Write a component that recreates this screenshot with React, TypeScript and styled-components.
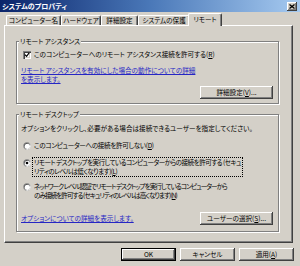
import React from "react";
import styled, { createGlobalStyle } from "styled-components";

const GlobalStyle = createGlobalStyle`
  html, body { margin: 0; padding: 0; background: #d4d0c8; }
  body {
    font-family: "Noto Sans CJK JP", "Noto Sans", sans-serif;
    font-size: 6.6px;
    font-feature-settings: "palt";
    color: #000;
  }
  * { box-sizing: border-box; }
`;

const Window = styled.div`
  width: 300px;
  height: 266px;
  background: #d4d0c8;
  display: flex;
  flex-direction: column;
  overflow: hidden;
`;

const TitleBar = styled.div`
  height: 12px;
  display: flex;
  align-items: center;
  justify-content: space-between;
  background: linear-gradient(to right, #0a246a 0%, #4a78b8 50%, #a6caf0 100%);
  padding: 0 3px 0 2px;
`;

const Title = styled.span`
  color: #fff;
  font-weight: 700;
  font-size: 7px;
  line-height: 12px;
`;

const CloseButton = styled.div`
  width: 10px;
  height: 9px;
  background: #d4d0c8;
  box-shadow: inset -1px -1px #404040, inset 1px 1px #fff, inset -2px -2px #808080;
  display: flex;
  align-items: center;
  justify-content: center;
`;

const TabRow = styled.div`
  display: flex;
  align-items: flex-end;
  height: 14px;
  padding-left: 6px;
  position: relative;
  z-index: 1;
`;

const Tab = styled.div<{ $w: number; $active?: boolean }>`
  width: ${(p) => p.$w}px;
  height: ${(p) => (p.$active ? 13 : 10)}px;
  margin-bottom: ${(p) => (p.$active ? 0 : 1)}px;
  margin-left: ${(p) => (p.$active ? -2 : 0)}px;
  background: #d4d0c8;
  border-top: 1px solid #fff;
  border-left: 1px solid #fff;
  border-right: 1px solid #404040;
  box-shadow: inset -1px 0 #808080;
  border-radius: 2px 2px 0 0;
  display: flex;
  align-items: center;
  justify-content: center;
  padding-bottom: ${(p) => (p.$active ? 2 : 0)}px;
  line-height: 9px;
  white-space: nowrap;
  position: relative;
  z-index: ${(p) => (p.$active ? 2 : 1)};
`;

const Panel = styled.div`
  margin: -1px 7px 0 4px;
  height: 218px;
  border-top: 1px solid #fff;
  border-left: 1px solid #fff;
  border-right: 1px solid #404040;
  border-bottom: 1px solid #404040;
  box-shadow: inset -1px -1px #808080;
  padding: 11px 13px 0 11px;
  display: flex;
  flex-direction: column;
`;

const Group = styled.fieldset<{ $pt: number; $pb: number; $mt: number }>`
  margin: ${(p) => p.$mt}px 0 0 0;
  border: 1px solid #808080;
  box-shadow: 1px 1px 0 #fff, inset 1px 1px 0 #fff;
  padding: ${(p) => p.$pt}px 5px ${(p) => p.$pb}px 4px;
  min-width: 0;
  display: flex;
  flex-direction: column;
`;

const Legend = styled.legend`
  padding: 0 1px;
  margin-left: -2px;
  line-height: 9px;
  background: #d4d0c8;
`;

const Line = styled.div<{ $mt?: number }>`
  line-height: 9px;
  white-space: nowrap;
  margin-top: ${(p) => p.$mt ?? 0}px;
`;

const OptionRow = styled.div<{ $mt?: number }>`
  display: flex;
  align-items: flex-start;
  gap: 2px;
  margin-top: ${(p) => p.$mt ?? 0}px;
  padding-left: 2px;
`;

const Box = styled.span`
  width: 8px;
  height: 8px;
  margin-top: 1px;
  flex: none;
  background: #fff;
  box-shadow: inset 1px 1px #808080, inset 2px 2px #404040, inset -1px -1px #fff, inset -2px -2px #d4d0c8;
  display: flex;
  align-items: center;
  justify-content: center;
`;

const RadioMark = styled.svg`
  width: 8px;
  height: 8px;
  margin-top: 1px;
  flex: none;
`;

const Label = styled.span<{ $focus?: boolean; $ls?: number }>`
  line-height: 9px;
  white-space: nowrap;
  padding: 0 1px;
  letter-spacing: ${(p) => p.$ls ?? 0}px;
  ${(p) => (p.$focus ? "outline: 1px dotted #000; outline-offset: 0;" : "")}
`;

const Link = styled.span`
  color: #2626c4;
  text-decoration: underline;
  line-height: 9px;
  white-space: nowrap;
`;

const LinkBlock = styled.div<{ $mt?: number }>`
  margin-top: ${(p) => p.$mt ?? 0}px;
  line-height: 9px;
`;

const ButtonRow = styled.div<{ $mt?: number }>`
  display: flex;
  justify-content: space-between;
  align-items: flex-end;
  margin-top: ${(p) => p.$mt ?? 0}px;
`;

const Button = styled.button<{ $w: number; $default?: boolean }>`
  width: ${(p) => p.$w}px;
  height: 13px;
  padding: 0;
  margin: 0;
  border: none;
  background: #d4d0c8;
  font-family: inherit;
  font-feature-settings: "palt";
  font-size: 6.6px;
  line-height: 11px;
  color: #000;
  box-shadow: ${(p) =>
    p.$default
      ? "inset 0 0 0 1px #000, inset -2px -2px #404040, inset 2px 2px #fff, inset -3px -3px #808080"
      : "inset -1px -1px #404040, inset 1px 1px #fff, inset -2px -2px #808080"};
`;

const Footer = styled.div`
  display: flex;
  justify-content: flex-end;
  gap: 4px;
  padding: 5px 6px 0 0;
`;

const Spacer = styled.div`
  flex: 1;
`;

function CheckMark() {
  return (
    <svg width="6" height="6" viewBox="0 0 7 7">
      <polyline points="1,3 3,5 6,1" fill="none" stroke="#000" strokeWidth="1.4" />
    </svg>
  );
}

function Radio({ checked }: { checked?: boolean }) {
  return (
    <RadioMark viewBox="0 0 12 12">
      <circle cx="6" cy="6" r="5.5" fill="#808080" />
      <circle cx="6.5" cy="6.5" r="5" fill="#fff" />
      <circle cx="6" cy="6" r="4.5" fill="#404040" />
      <circle cx="6.5" cy="6.5" r="4" fill="#fff" />
      {checked && <circle cx="6" cy="6" r="2" fill="#000" />}
    </RadioMark>
  );
}

export default function App() {
  return (
    <>
      <GlobalStyle />
      <Window>
        <TitleBar>
          <Title>システムのプロパティ</Title>
          <CloseButton>
            <svg width="6" height="5" viewBox="0 0 6 5">
              <path d="M0.5 0.5 L5.5 4.5 M5.5 0.5 L0.5 4.5" stroke="#000" strokeWidth="1.3" />
            </svg>
          </CloseButton>
        </TitleBar>
        <TabRow>
          <Tab $w={55}>コンピューター名</Tab>
          <Tab $w={40}>ハードウェア</Tab>
          <Tab $w={37}>詳細設定</Tab>
          <Tab $w={52}>システムの保護</Tab>
          <Tab $w={34} $active>
            リモート
          </Tab>
        </TabRow>
        <Panel>
          <Group $pt={4} $pb={4} $mt={0}>
            <Legend>リモート アシスタンス</Legend>
            <OptionRow>
              <Box>
                <CheckMark />
              </Box>
              <Label>
                このコンピューターへのリモート アシスタンス接続を許可する(<u>R</u>)
              </Label>
            </OptionRow>
            <LinkBlock $mt={7}>
              <Link>
                リモート アシスタンスを有効にした場合の動作についての詳細
                <br />
                を表示します。
              </Link>
            </LinkBlock>
            <ButtonRow $mt={2}>
              <Spacer />
              <Button $w={73}>
                詳細設定(<u>V</u>)...
              </Button>
            </ButtonRow>
          </Group>
          <Group $pt={5} $pb={6} $mt={6}>
            <Legend>リモート デスクトップ</Legend>
            <Line>オプションをクリックし、必要がある場合は接続できるユーザーを指定してください。</Line>
            <OptionRow $mt={8}>
              <Radio />
              <Label $ls={-0.35}>
                このコンピューターへの接続を許可しない(<u>D</u>)
              </Label>
            </OptionRow>
            <OptionRow $mt={8}>
              <Radio checked />
              <Label $focus $ls={-0.55}>
                リモート デスクトップを実行しているコンピューターからの接続を許可する (セキュ
                <br />
                リティのレベルは低くなります)(<u>L</u>)
              </Label>
            </OptionRow>
            <OptionRow $mt={6}>
              <Radio />
              <Label $ls={-0.95}>
                ネットワーク レベル認証でリモート デスクトップを実行しているコンピューターから
                <br />
                のみ接続を許可する (セキュリティのレベルは高くなります)(<u>N</u>)
              </Label>
            </OptionRow>
            <ButtonRow $mt={12}>
              <Link style={{ marginBottom: 2 }}>オプションについての詳細を表示します。</Link>
              <Button $w={73}>
                ユーザーの選択(<u>S</u>)...
              </Button>
            </ButtonRow>
          </Group>
        </Panel>
        <Footer>
          <Button $w={55} $default>
            OK
          </Button>
          <Button $w={55}>キャンセル</Button>
          <Button $w={55}>
            適用(<u>A</u>)
          </Button>
        </Footer>
      </Window>
    </>
  );
}
